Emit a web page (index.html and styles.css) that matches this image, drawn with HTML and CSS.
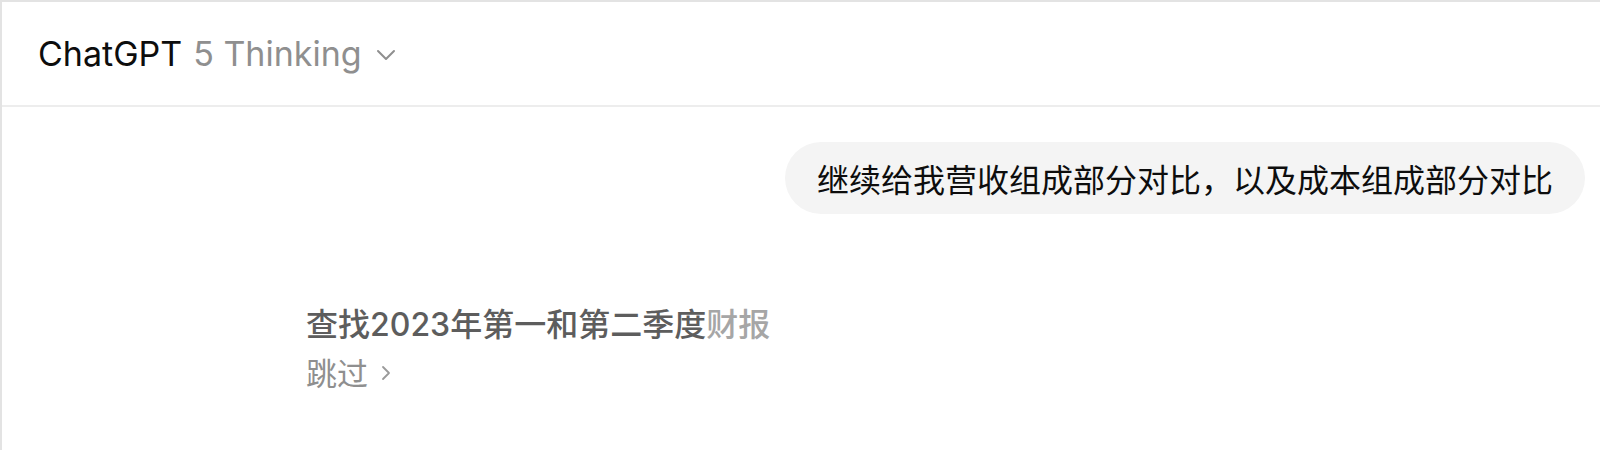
FILE: index.html
```html
<!DOCTYPE html>
<html lang="zh-CN">
<head>
<meta charset="utf-8">
<link rel="stylesheet" href="styles.css">
</head>
<body>
<div class="app">
  <header class="topbar">
    <button class="model-switch">
      <span class="brand">ChatGPT</span>
      <span class="model">5 Thinking</span>
      <svg class="chev" width="20" height="12" viewBox="0 0 20 12"><path d="M2 2 L10 10 L18 2" fill="none" stroke="#8f8f8f" stroke-width="2" stroke-linecap="round" stroke-linejoin="round"/></svg>
    </button>
  </header>
  <main class="thread">
    <div class="user-row">
      <div class="bubble">继续给我营收组成部分对比，以及成本组成部分对比</div>
    </div>
    <div class="thinking">
      <div class="step">查找2023年第一和第二季度<span class="fade">财报</span></div>
      <div class="skip">跳过
        <svg class="skip-chev" width="12" height="20" viewBox="0 0 12 20"><path d="M3 4 L9 10 L3 16" fill="none" stroke="#9a9a9a" stroke-width="1.8" stroke-linecap="round" stroke-linejoin="round"/></svg>
      </div>
    </div>
  </main>
</div>
</body>
</html>
```
FILE: styles.css
```css
html, body {
  margin: 0;
  padding: 0;
  background: #ffffff;
}
body {
  font-family: Inter, "Noto Sans CJK SC", sans-serif;
  color: #0d0d0d;
}
.app {
  width: 1600px;
  height: 450px;
  box-sizing: border-box;
  border-top: 2px solid #e3e3e3;
  border-left: 2px solid #e3e3e3;
  overflow: hidden;
}
.topbar {
  height: 103px;
  border-bottom: 2px solid #ededed;
  display: flex;
  align-items: center;
  padding-left: 36px;
}
.model-switch {
  display: flex;
  align-items: center;
  background: none;
  border: 0;
  padding: 0;
  font-family: Inter, sans-serif;
  font-size: 34px;
  line-height: 44px;
  cursor: pointer;
}
.brand {
  color: #0d0d0d;
}
.model {
  color: #8f8f8f;
  margin-left: 11px;
}
.chev {
  margin-left: 14px;
  margin-top: 2px;
}
.thread {
  display: flex;
  flex-direction: column;
}
.user-row {
  display: flex;
  justify-content: flex-end;
  padding-right: 15px;
  margin-top: 35px;
}
.bubble {
  background: #f4f4f4;
  border-radius: 36px;
  padding: 14px 32px;
  font-size: 32px;
  line-height: 44px;
  font-family: "Noto Sans CJK SC", sans-serif;
  color: #0d0d0d;
}
.thinking {
  padding-left: 304px;
  margin-top: 89px;
  display: flex;
  flex-direction: column;
}
.step {
  font-family: Inter, "Noto Sans CJK SC", sans-serif;
  font-size: 32px;
  line-height: 44px;
  font-weight: 500;
  color: #5d5d5d;
}
.fade {
  color: #a6a6a6;
}
.skip {
  display: flex;
  align-items: center;
  margin-top: 5px;
  font-family: "Noto Sans CJK SC", sans-serif;
  font-size: 31px;
  line-height: 40px;
  color: #8f8f8f;
}
.skip-chev {
  margin-left: 12px;
  margin-top: 2px;
}
```
